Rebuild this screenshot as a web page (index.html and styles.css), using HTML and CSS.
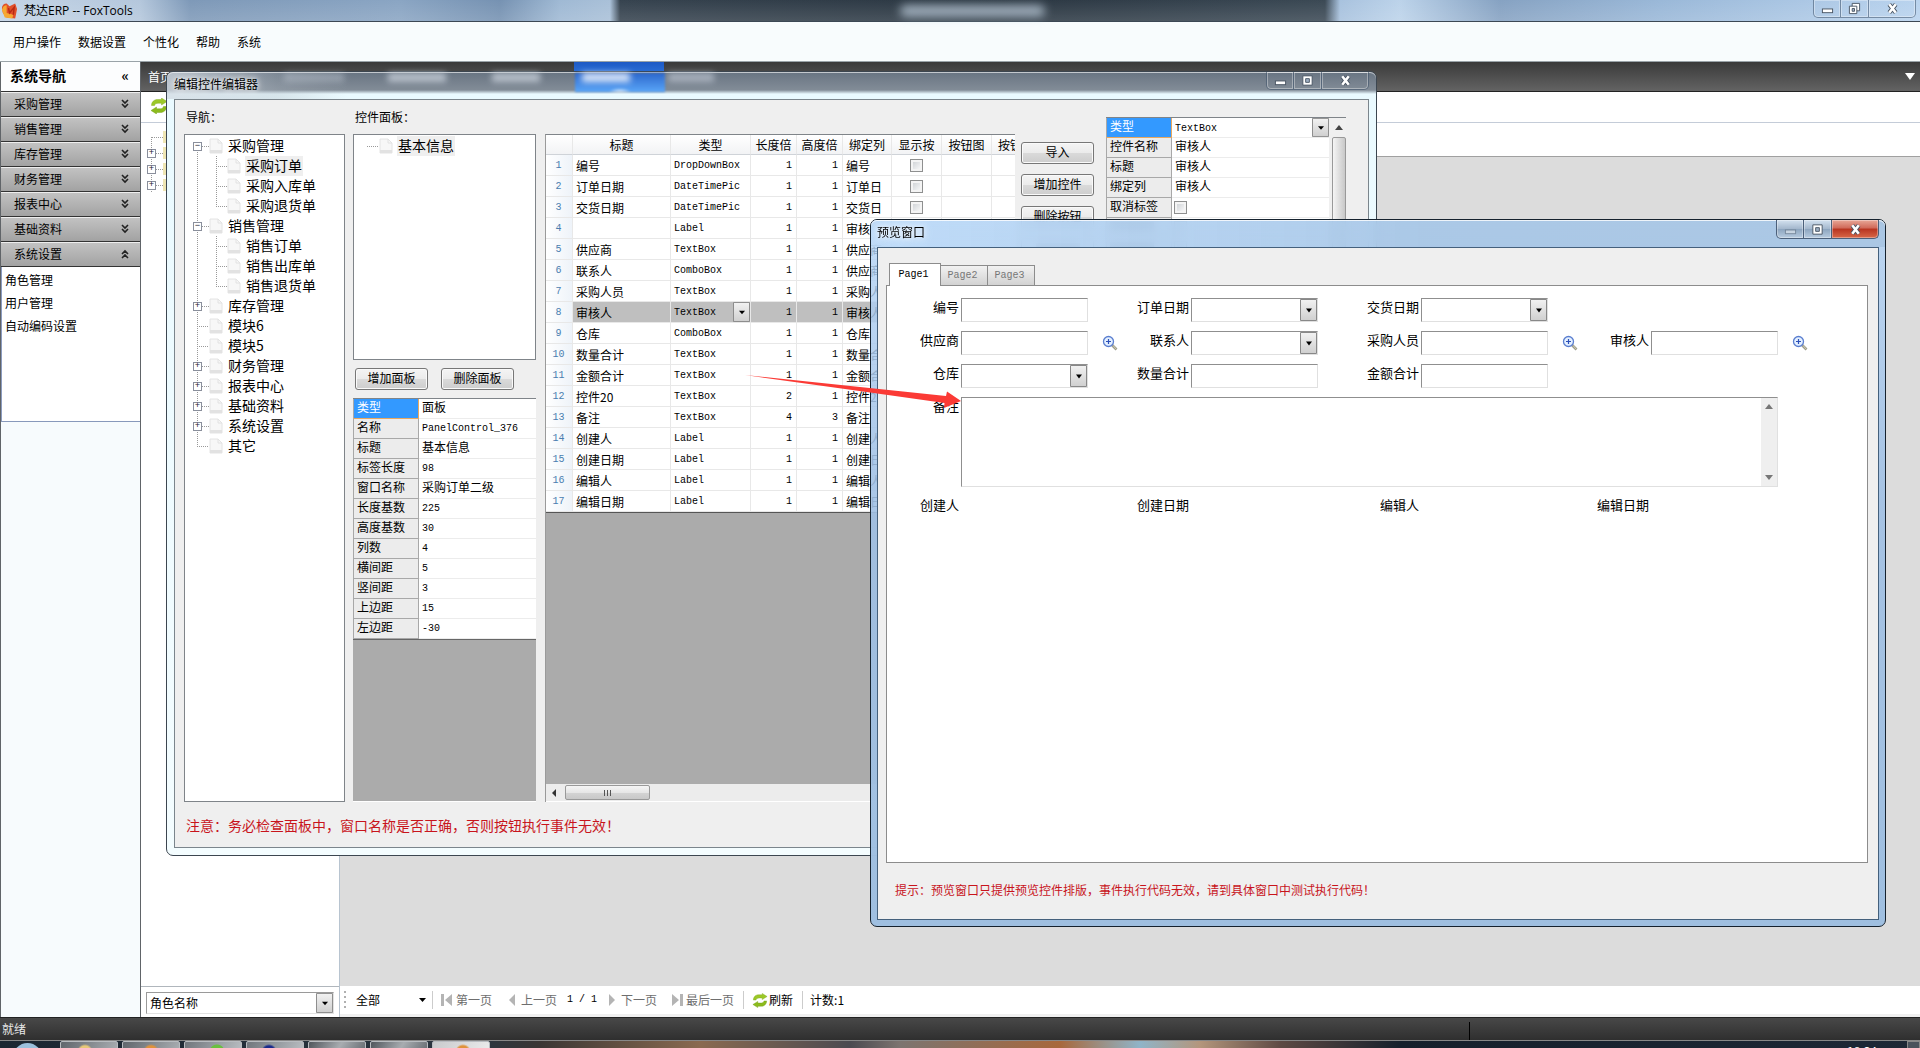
FILE: index.html
```html
<!DOCTYPE html>
<html lang="zh-CN">
<head>
<meta charset="utf-8">
<title>梵达ERP -- FoxTools</title>
<link rel="stylesheet" href="styles.css">
</head>
<body>
<svg class="defs" aria-hidden="true">
  <defs>
    <symbol id="refresh" viewBox="0 0 18 16"><path d="M1.500 7.500C1.500 4 4 1.500 7.500 1.500h4V0L17 3.500 11.500 7V5.200H8C6 5.200 5 6 4.500 7.500z" fill="#9cc828" stroke="#7aa614" stroke-width=".4"/><path d="M16.500 8.500c0 3.500-2.500 6-6 6h-4V16L1 12.500 6.500 9v1.800H10c2 0 3-.8 3.500-2.300z" fill="#8cbb1c" stroke="#6c9a10" stroke-width=".4"/></symbol>
    <symbol id="zoom" viewBox="0 0 16 16"><path d="M10 10l4.500 4.500" stroke="#9a9a90" stroke-width="2.600"/><path d="M11 10.500l3.500 4" stroke="#d8d2a8" stroke-width="1"/><circle cx="6.500" cy="6.500" r="5" fill="#e4f0ff" stroke="#5b7fd0" stroke-width="1.300"/><path d="M6.500 4v5M4 6.500h5" stroke="#2d50b8" stroke-width="1.200"/></symbol>
    <symbol id="page" viewBox="0 0 14 16"><path d="M1 1h8l4 4v10H1z" fill="#f7f7f7" stroke="#e4e4e4"/><path d="M1 12h12v3H1z" fill="#e2e2e2"/><path d="M9 1v4h4" fill="none" stroke="#e2e2e2"/></symbol>
    <symbol id="down" viewBox="0 0 8 10"><path d="M1 1l3 3 3-3M1 5l3 3 3-3" fill="none" stroke="#222" stroke-width="1.600"/></symbol>
    <symbol id="up" viewBox="0 0 8 10"><path d="M1 5l3-3 3 3M1 9l3-3 3 3" fill="none" stroke="#222" stroke-width="1.600"/></symbol>
    <symbol id="w-min" viewBox="0 0 14 14"><rect x="1.500" y="7.500" width="11" height="4" fill="#fff" stroke="#4a5563"/></symbol>
    <symbol id="w-max" viewBox="0 0 14 14"><path d="M2 2h10v10H2z" fill="#fff" stroke="#4a5563"/><path d="M5 5h4v4H5z" fill="#9fb0c4" stroke="#4a5563"/></symbol>
    <symbol id="w-rest" viewBox="0 0 14 14"><path d="M4.500 1.500h8v8h-8z" fill="#fff" stroke="#4a5563"/><path d="M1.500 4.500h8v8h-8z" fill="#fff" stroke="#4a5563"/><path d="M4.500 7h2.500v3H4.500z" fill="#9fb0c4" stroke="#4a5563"/></symbol>
    <symbol id="w-close" viewBox="0 0 14 14"><path d="M3.500 2.500l7 9M10.500 2.500l-7 9" stroke="#4a5563" stroke-width="4.600"/><path d="M3.500 2.500l7 9M10.500 2.500l-7 9" stroke="#fff" stroke-width="2.800"/></symbol>
  </defs>
</svg>

<header class="titlebar">
  <svg class="logo" viewBox="0 0 18 18"><path d="M1 6C1 3 3 1 6 1l3 3 6-3 2 6-2 10-9-1-4-5z" fill="#e0502a"/><path d="M1 8C2 4 4 3 6 3v8l7 2-1 4-8-1z" fill="#f6a832"/><path d="M8 6l1 5 5-6-1 8" fill="none" stroke="#b82a14" stroke-width="1.500"/></svg>
  <h1>梵达ERP -- FoxTools</h1>
  <span class="haze"></span>
  <div class="winbtns">
    <button aria-label="最小化"><svg><use href="#w-min"/></svg></button><button aria-label="还原"><svg><use href="#w-rest"/></svg></button><button class="wide" aria-label="关闭"><svg><use href="#w-close"/></svg></button>
  </div>
</header>
<nav class="menu"><a href="#">用户操作</a><a href="#">数据设置</a><a href="#">个性化</a><a href="#">帮助</a><a href="#">系统</a></nav>

<div class="work">
  <aside class="side">
    <h2>系统导航<span>«</span></h2>
    <button class="acc">采购管理<svg><use href="#down"/></svg></button>
    <button class="acc">销售管理<svg><use href="#down"/></svg></button>
    <button class="acc">库存管理<svg><use href="#down"/></svg></button>
    <button class="acc">财务管理<svg><use href="#down"/></svg></button>
    <button class="acc">报表中心<svg><use href="#down"/></svg></button>
    <button class="acc">基础资料<svg><use href="#down"/></svg></button>
    <button class="acc">系统设置<svg><use href="#up"/></svg></button>
    <div class="links"><a href="#">角色管理</a><a href="#">用户管理</a><a href="#">自动编码设置</a></div>
  </aside>
  <main class="main">
    <div class="tabbar">
      <a href="#">首页</a>
      <i class="on"></i>
      <span class="more"></span>
    </div>
    <div class="tools"><svg><use href="#refresh"/></svg></div>
    <div class="content">
      <section class="roles">
        <ul class="stub"><li><b></b></li><li><em>+</em><b></b></li><li><em>+</em><b></b></li><li><em>+</em><b></b></li></ul>
        <div class="rolebox"><select class="combo" aria-label="查询字段"><option>角色名称</option></select></div>
      </section>
      <section class="data">
        <div class="band"></div>
        <div class="canvas"></div>
        <div class="pager">
          <span class="grip"></span>
          <select class="range" aria-label="范围"><option>全部</option></select>
          <span class="sep"></span>
          <button disabled><svg viewBox="0 0 12 12"><path d="M0 0h3v12H0zM11 0v12L4 6z"/></svg>第一页</button>
          <button disabled><svg viewBox="0 0 12 12"><path d="M9 0v12L3 6z"/></svg>上一页</button>
          <span class="num">1 / 1</span>
          <button disabled><svg viewBox="0 0 12 12"><path d="M3 0v12l6-6z"/></svg>下一页</button>
          <button class="last" disabled><svg viewBox="0 0 12 12"><path d="M9 0h3v12H9zM1 0v12l7-6z"/></svg>最后一页</button>
          <span class="sep"></span>
          <button class="live"><svg><use href="#refresh"/></svg>刷新</button>
          <span class="sep"></span>
          <span>计数:1</span>
        </div>
      </section>
    </div>
  </main>
</div>
<footer class="status"><span>就绪</span><i></i></footer>
<div class="taskbar"><b class="orb"></b><i class="y"></i><i class="o"></i><i class="g"></i><i class="n"></i><i></i><i></i><i class="o lit"></i><span class="clock">18:34</span><span class="peek"></span></div>

<section class="win editor">
  <header class="caption"><h3>编辑控件编辑器</h3>
    <div class="winbtns"><button aria-label="最小化"><svg><use href="#w-min"/></svg></button><button aria-label="最大化"><svg><use href="#w-max"/></svg></button><button class="wide" aria-label="关闭"><svg><use href="#w-close"/></svg></button></div>
  </header>
  <div class="client">
    <div class="cols">
      <div class="col c-tree">
        <h4>导航：</h4>
        <ul class="tree box">
          <li><div class="node"><em>−</em><s></s><svg><use href="#page"/></svg><span>采购管理</span></div>
            <ul><li><div class="node"><s></s><svg><use href="#page"/></svg><span class="sel">采购订单</span></div></li><li><div class="node"><s></s><svg><use href="#page"/></svg><span>采购入库单</span></div></li><li><div class="node"><s></s><svg><use href="#page"/></svg><span>采购退货单</span></div></li></ul></li>
          <li><div class="node"><em>−</em><s></s><svg><use href="#page"/></svg><span>销售管理</span></div>
            <ul><li><div class="node"><s></s><svg><use href="#page"/></svg><span>销售订单</span></div></li><li><div class="node"><s></s><svg><use href="#page"/></svg><span>销售出库单</span></div></li><li><div class="node"><s></s><svg><use href="#page"/></svg><span>销售退货单</span></div></li></ul></li>
          <li><div class="node"><em>+</em><s></s><svg><use href="#page"/></svg><span>库存管理</span></div></li>
          <li><div class="node leaf"><s></s><svg><use href="#page"/></svg><span>模块6</span></div></li>
          <li><div class="node leaf"><s></s><svg><use href="#page"/></svg><span>模块5</span></div></li>
          <li><div class="node"><em>+</em><s></s><svg><use href="#page"/></svg><span>财务管理</span></div></li>
          <li><div class="node"><em>+</em><s></s><svg><use href="#page"/></svg><span>报表中心</span></div></li>
          <li><div class="node"><em>+</em><s></s><svg><use href="#page"/></svg><span>基础资料</span></div></li>
          <li><div class="node"><em>+</em><s></s><svg><use href="#page"/></svg><span>系统设置</span></div></li>
          <li><div class="node leaf"><s></s><svg><use href="#page"/></svg><span>其它</span></div></li>
        </ul>
      </div>
      <div class="col c-panel">
        <h4>控件面板：</h4>
        <ul class="panels box"><li><div class="node leaf"><s></s><svg><use href="#page"/></svg><span class="sel">基本信息</span></div></li></ul>
        <div class="pair"><button class="btn">增加面板</button><button class="btn">删除面板</button></div>
        <div class="sheet">
          <table class="props">
            <tr class="cur"><th>类型</th><td>面板</td></tr>
            <tr><th>名称</th><td class="mono">PanelControl_376</td></tr>
            <tr><th>标题</th><td>基本信息</td></tr>
            <tr><th>标签长度</th><td class="mono">98</td></tr>
            <tr><th>窗口名称</th><td>采购订单二级</td></tr>
            <tr><th>长度基数</th><td class="mono">225</td></tr>
            <tr><th>高度基数</th><td class="mono">30</td></tr>
            <tr><th>列数</th><td class="mono">4</td></tr>
            <tr><th>横间距</th><td class="mono">5</td></tr>
            <tr><th>竖间距</th><td class="mono">3</td></tr>
            <tr><th>上边距</th><td class="mono">15</td></tr>
            <tr><th>左边距</th><td class="mono">-30</td></tr>
          </table>
        </div>
      </div>
      <div class="c-grid">
        <table class="grid">
          <colgroup><col class="w-no"><col class="w-title"><col class="w-type"><col class="w-len"><col class="w-len"><col class="w-bind"><col class="w-chk"><col class="w-chk"><col class="w-chk"></colgroup>
          <thead><tr><th></th><th>标题</th><th>类型</th><th>长度倍</th><th>高度倍</th><th>绑定列</th><th>显示按</th><th>按钮图</th><th class="part">按钮</th></tr></thead>
          <tbody>
            <tr><th>1</th><td>编号</td><td>DropDownBox</td><td>1</td><td>1</td><td>编号</td><td><input type="checkbox" aria-label="显示按钮"></td><td></td><td></td></tr>
            <tr><th>2</th><td>订单日期</td><td>DateTimePic</td><td>1</td><td>1</td><td>订单日</td><td><input type="checkbox" aria-label="显示按钮"></td><td></td><td></td></tr>
            <tr><th>3</th><td>交货日期</td><td>DateTimePic</td><td>1</td><td>1</td><td>交货日</td><td><input type="checkbox" aria-label="显示按钮"></td><td></td><td></td></tr>
            <tr><th>4</th><td></td><td>Label</td><td>1</td><td>1</td><td>审核</td><td></td><td></td><td></td></tr>
            <tr><th>5</th><td>供应商</td><td>TextBox</td><td>1</td><td>1</td><td>供应商</td><td></td><td></td><td></td></tr>
            <tr><th>6</th><td>联系人</td><td>ComboBox</td><td>1</td><td>1</td><td>供应商</td><td></td><td></td><td></td></tr>
            <tr><th>7</th><td>采购人员</td><td>TextBox</td><td>1</td><td>1</td><td>采购人</td><td></td><td></td><td></td></tr>
            <tr class="cur"><th>8</th><td>审核人</td><td class="edit"><select class="combo mono" aria-label="类型"><option>TextBox</option></select></td><td>1</td><td>1</td><td>审核人</td><td></td><td></td><td></td></tr>
            <tr><th>9</th><td>仓库</td><td>ComboBox</td><td>1</td><td>1</td><td>仓库</td><td></td><td></td><td></td></tr>
            <tr><th>10</th><td>数量合计</td><td>TextBox</td><td>1</td><td>1</td><td>数量合</td><td></td><td></td><td></td></tr>
            <tr><th>11</th><td>金额合计</td><td>TextBox</td><td>1</td><td>1</td><td>金额合</td><td></td><td></td><td></td></tr>
            <tr><th>12</th><td>控件20</td><td>TextBox</td><td>2</td><td>1</td><td>控件20</td><td></td><td></td><td></td></tr>
            <tr><th>13</th><td>备注</td><td>TextBox</td><td>4</td><td>3</td><td>备注</td><td></td><td></td><td></td></tr>
            <tr><th>14</th><td>创建人</td><td>Label</td><td>1</td><td>1</td><td>创建人</td><td></td><td></td><td></td></tr>
            <tr><th>15</th><td>创建日期</td><td>Label</td><td>1</td><td>1</td><td>创建日</td><td></td><td></td><td></td></tr>
            <tr><th>16</th><td>编辑人</td><td>Label</td><td>1</td><td>1</td><td>编辑人</td><td></td><td></td><td></td></tr>
            <tr><th>17</th><td>编辑日期</td><td>Label</td><td>1</td><td>1</td><td>编辑日</td><td></td><td></td><td></td></tr>
          </tbody>
        </table>
        <div class="hscroll"><svg viewBox="0 0 6 8"><path d="M5 0v8L1 4z" fill="#333"/></svg><span><i></i><i></i><i></i></span></div>
      </div>
      <div class="c-btns"><button class="btn">导入</button><button class="btn">增加控件</button><button class="btn">删除按钮</button><button class="btn" aria-label="上移"><i class="smear"></i></button></div>
      <div class="c-props">
        <table class="props">
          <tr class="cur"><th>类型</th><td class="edit"><select class="combo mono" aria-label="类型"><option>TextBox</option></select></td></tr>
          <tr><th>控件名称</th><td>审核人</td></tr>
          <tr><th>标题</th><td>审核人</td></tr>
          <tr><th>绑定列</th><td>审核人</td></tr>
          <tr><th><label for="nolabel">取消标签</label></th><td class="edit"><input type="checkbox" id="nolabel"></td></tr>
          <tr><th><i class="smear"></i></th><td class="edit"><input type="checkbox" aria-label="选项"></td></tr>
          <tr><th><i class="smear"></i></th><td class="edit"><input type="checkbox" aria-label="选项"></td></tr>
        </table>
        <div class="vscroll"><svg viewBox="0 0 8 5"><path d="M0 5h8L4 0z" fill="#444"/></svg><span></span></div>
      </div>
    </div>
    <p class="notice">注意：务必检查面板中，窗口名称是否正确，否则按钮执行事件无效！</p>
  </div>
</section>

<section class="win preview">
  <header class="caption"><h3>预览窗口</h3>
    <div class="winbtns"><button class="dim" aria-label="最小化"><svg><use href="#w-min"/></svg></button><button aria-label="最大化"><svg><use href="#w-max"/></svg></button><button class="wide red" aria-label="关闭"><svg><use href="#w-close"/></svg></button></div>
  </header>
  <div class="client">
    <div class="tabs"><button class="on">Page1</button><button>Page2</button><button>Page3</button></div>
    <form class="form">
      <div class="f"><label for="f1">编号</label><input id="f1" type="text"></div>
      <div class="f"><label for="f2">订单日期</label><select id="f2" class="combo"></select></div>
      <div class="f"><label for="f3">交货日期</label><select id="f3" class="combo"></select></div>
      <div class="f"></div>
      <div class="f"><label for="f5">供应商</label><input id="f5" type="text"><svg><use href="#zoom"/></svg></div>
      <div class="f"><label for="f6">联系人</label><select id="f6" class="combo"></select></div>
      <div class="f"><label for="f7">采购人员</label><input id="f7" type="text"><svg><use href="#zoom"/></svg></div>
      <div class="f"><label for="f8">审核人</label><input id="f8" type="text"><svg><use href="#zoom"/></svg></div>
      <div class="f"><label for="f9">仓库</label><select id="f9" class="combo"></select></div>
      <div class="f"><label for="f10">数量合计</label><input id="f10" type="text"></div>
      <div class="f"><label for="f11">金额合计</label><input id="f11" type="text"></div>
      <div class="f"></div>
      <div class="f memo"><label for="f13">备注</label><div class="area"><textarea id="f13"></textarea><div class="rail"><svg viewBox="0 0 8 5"><path d="M0 5h8L4 0z" fill="#777"/></svg><svg viewBox="0 0 8 5"><path d="M0 0h8L4 5z" fill="#777"/></svg></div></div></div>
      <div class="f"><span class="lab">创建人</span></div>
      <div class="f"><span class="lab">创建日期</span></div>
      <div class="f"><span class="lab">编辑人</span></div>
      <div class="f"><span class="lab">编辑日期</span></div>
    </form>
    <p class="hint">提示：预览窗口只提供预览控件排版，事件执行代码无效，请到具体窗口中测试执行代码！</p>
  </div>
</section>

<svg class="arrow" viewBox="0 0 217 34" aria-hidden="true"><path d="M0 0L201 21l1-4.500 14 9.500-17 7 .5-5L150 21 100 14z" fill="#fb3a35"/></svg>
</body>
</html>
```

FILE: styles.css
```css
* { box-sizing: border-box; }
body {
  margin: 0;
  height: 100vh;
  position: relative;
  display: flex;
  flex-direction: column;
  overflow: hidden;
  background: #fff;
  color: #000;
  font: 12px/20px "Noto Sans CJK SC", "Liberation Sans", sans-serif;
}
h1, h2, h3, h4, p, ul { margin: 0; padding: 0; font-weight: normal; font-size: 12px; }
ul { list-style: none; }
button, input, select, textarea { font: inherit; color: inherit; margin: 0; padding: 0; border: 0; border-radius: 0; background: none; outline: 0; }
a { color: inherit; text-decoration: none; }
svg { display: block; flex: none; }
table { border-collapse: separate; border-spacing: 0; table-layout: fixed; }
th { font-weight: normal; text-align: left; }
.defs { position: absolute; width: 0; height: 0; }
.mono { font: 10px/20px "Liberation Mono", monospace; }

/* main window frame */
.titlebar {
  flex: none;
  height: 22px;
  display: flex;
  align-items: center;
  padding: 0 4px 0 1px;
  border-bottom: 1px solid #3c4854;
  background:
    linear-gradient(to bottom, rgba(255,255,255,0), rgba(255,255,255,.12)),
    linear-gradient(to right, #c3d4e6 0, #b4c7dc 140px, #7e99b8 190px, #8aa5c3 400px, #7692b2 500px, #9fb9d4 560px, #a9c0d8 610px, #36434f 620px, #2b3742 1000px, #3b4955 1325px, #a8c2de 1340px, #bcd3ea 1400px, #86a2c2 1500px, #9ab8d8 1660px, #b9d3ee 100%);
}
.logo { width: 17px; height: 18px; }
.titlebar h1 { font-family: "Open Sans", "Noto Sans CJK SC", sans-serif; margin-left: 6px; }
.haze { width: 145px; height: 12px; margin: 0 auto; border-radius: 6px; background: rgba(190,205,220,.75); filter: blur(5px); }
.winbtns { display: flex; align-self: flex-start; }
.winbtns button { width: 28px; height: 18px; display: flex; align-items: center; justify-content: center; border: 1px solid rgba(60,80,105,.55); border-top: 0; border-left-width: 0; box-shadow: inset 0 0 0 1px rgba(255,255,255,.35); }
.winbtns button:first-child { border-left-width: 1px; border-radius: 0 0 0 5px; }
.winbtns button.wide { width: 47px; border-radius: 0 0 5px 0; }
.winbtns svg { width: 13px; height: 13px; }
.menu { flex: none; height: 40px; display: flex; align-items: center; gap: 17px; padding: 0 13px; background: #f8fcfd; border-bottom: 1px solid #9aa3a8; }

.work { flex: 1; min-height: 0; display: flex; }
.side { width: 141px; flex: none; background: #f7fbfd; border: solid #606468; border-width: 0 1px; }
.side h2 { height: 30px; padding: 0 11px 0 9px; display: flex; justify-content: space-between; font: bold 14px/27px "Noto Sans CJK SC", sans-serif; background: #fcfdfe; border-bottom: 1px solid #333; }
.acc { width: 100%; height: 25px; display: flex; align-items: center; justify-content: space-between; padding: 0 11px 1px 13px; background: linear-gradient(#c2c2c2, #a2a2a2); border-top: 1px solid #eee; border-bottom: 1px solid #333; }
.acc svg { width: 8px; height: 10px; }
.links { height: 155px; padding: 1px 4px; display: flex; flex-direction: column; line-height: 23px; background: #fff; border-bottom: 1px solid #8899bb; box-shadow: inset 1px 0 #8c9cc0; }

.main { flex: 1; min-width: 0; display: flex; flex-direction: column; }
.tabbar { flex: none; height: 30px; padding: 0 5px 0 7px; display: flex; align-items: center; color: #fff; line-height: 27px; background: linear-gradient(#3a3a3a, #636363); border-bottom: 1px solid #222; }
.tabbar a { margin-right: 402px; }
.tabbar i { width: 90px; height: 29px; }
.tabbar i.on { background: linear-gradient(#1d59c4, #3f93f6); }
.more { margin-left: auto; border: 5px solid transparent; border-top: 7px solid #fff; border-bottom: 0; }
.tools { flex: none; height: 31px; padding: 6px 9px; border-bottom: 1px solid #c4ccd8; }
.tools svg { width: 18px; height: 16px; }
.content { flex: 1; min-height: 0; display: flex; }
.roles { width: 199px; flex: none; display: flex; flex-direction: column; border-right: 1px solid #b8c4d0; }
.stub { flex: 1; padding: 6px 6px; }
.stub li { height: 16px; display: flex; align-items: center; background: repeating-linear-gradient(90deg, #999 0 1px, transparent 1px 2px) 5px 8px / 11px 1px no-repeat, repeating-linear-gradient(#999 0 1px, transparent 1px 2px) 4px 0 / 1px 16px no-repeat; }
.stub li:first-child { background-position: 5px 8px, 4px 8px; }
.stub em, .node em { width: 9px; height: 9px; flex: none; font: 9px/7px "Liberation Mono", monospace; text-align: center; color: #223; border: 1px solid #8a8f9c; background: #fff; }
.stub b { width: 8px; height: 12px; margin-left: 7px; background: #efe6b4; }
.stub li:first-child b { margin-left: 16px; }
.rolebox { flex: none; height: 31px; padding: 5px; border-top: 1px solid #b0b6bc; }
.combo {
  appearance: none;
  width: 100%;
  height: 100%;
  border: 1px solid #9a9a9a;
  border-right-color: #e2e2e2;
  border-bottom-color: #e2e2e2;
  background:
    url("data:image/svg+xml,%3Csvg xmlns='http://www.w3.org/2000/svg' viewBox='0 0 17 22' preserveAspectRatio='none'%3E%3Cdefs%3E%3ClinearGradient id='g' x2='0' y2='1'%3E%3Cstop stop-color='%23f2f2f2'/%3E%3Cstop offset='1' stop-color='%23cfcfcf'/%3E%3C/linearGradient%3E%3C/defs%3E%3Cpath d='M.5.500h16v21H.500z' fill='url(%23g)' stroke='%23888'/%3E%3Cpath d='M6 9.500h6l-3 4z'/%3E%3C/svg%3E") right center / 17px 100% no-repeat #fff;
}
.rolebox .combo { height: 22px; width: 188px; padding-left: 3px; line-height: 18px; }
.data { flex: 1; min-width: 0; display: flex; flex-direction: column; }
.band { flex: none; height: 34px; border-bottom: 1px solid #a0a0a0; }
.canvas { flex: 1; background: #dcdcdc; }
.pager { flex: none; height: 31px; padding: 0 4px; display: flex; align-items: center; border-bottom: 3px solid #f0f0f0; }
.grip { width: 2px; height: 18px; margin-right: 10px; background: repeating-linear-gradient(#b0b0b0 0 2px, transparent 2px 5px); }
.range { appearance: none; width: 70px; height: 20px; background: url("data:image/svg+xml,%3Csvg xmlns='http://www.w3.org/2000/svg' viewBox='0 0 7 4'%3E%3Cpath d='M0 0h7L3.500 4z'/%3E%3C/svg%3E") right center / 7px 4px no-repeat; }
.sep { width: 1px; height: 18px; margin: 0 7px 0 6px; background: #ccc; }
.pager button { display: flex; align-items: center; gap: 3px; padding: 0 1px; margin-right: 12px; color: #6e6e6e; }
.pager button svg { width: 12px; height: 12px; fill: #b4b4b4; }
.pager button.last { margin-right: 2px; }
.pager button.live { color: #000; margin: 0 2px 0 0; gap: 1px; }
.pager button.live svg { width: 16px; height: 15px; }
.pager .num { margin: 0 8px 0 -3px; font: 10px/20px "Liberation Mono", monospace; }

.status { flex: none; height: 24px; display: flex; padding: 0 450px 0 2px; justify-content: space-between; color: #e8e8e8; line-height: 22px; background: linear-gradient(#484848, #2f2f2f); border-top: 1px solid #222; border-bottom: 1px solid #888; }
.status i { width: 1px; height: 18px; margin-top: 4px; background: #000; }
.taskbar { flex: none; height: 7px; overflow: hidden; display: flex; gap: 4px; padding-left: 13px; background: linear-gradient(to right, #1b2631 0, #2b3640 480px, #3a3634 540px, #8a6a50 700px, #4b4a50 850px, #7c7470 900px, #a8683c 1060px, #8fb4c8 1140px, #b4967c 1200px, #5e4a44 1280px, #16202c 1400px, #1e2836 100%); }
.taskbar i { width: 58px; height: 20px; border: 1px solid #b8bcc0; border-radius: 2px; background: linear-gradient(120deg, #50565c, #a8acb0 50%, #5c6268); }
.taskbar i.o { background: radial-gradient(circle at 28px 10px, #e0923a 6px, transparent 8px), linear-gradient(120deg, #60666c, #b0b4b8); }
.taskbar i.y { background: radial-gradient(circle at 24px 10px, #e8c878 6px, transparent 8px), linear-gradient(120deg, #60666c, #b0b4b8); }
.taskbar i.g { background: radial-gradient(circle at 32px 10px, #6ac040 7px, transparent 8px), linear-gradient(120deg, #70767c, #c0c4c8); }
.taskbar i.n { background: radial-gradient(circle at 22px 10px, #1a2a8c 6px, transparent 8px), linear-gradient(120deg, #70767c, #c0c4c8); }
.taskbar i.lit { background: radial-gradient(circle at 30px 10px, #e0923a 6px, transparent 8px), linear-gradient(120deg, #c8cacc, #eee); }
.orb { width: 29px; height: 29px; margin: 2px 14px 0 0; border-radius: 50%; background: #9cc0dc; }
.clock { margin: 4px 26px 0 auto; color: #fff; line-height: 12px; }
.peek { width: 13px; height: 20px; border: 1px solid #888; background: #4a525c; }

/* floating windows */
.win { position: absolute; display: flex; flex-direction: column; border: 1px solid #3c4650; border-radius: 7px; }
.win .client { flex: 1; min-height: 0; display: flex; flex-direction: column; background: #efefef; border: 1px solid #7b858c; }
.caption { flex: none; display: flex; justify-content: space-between; border-radius: 6px 6px 0 0; }
.caption h3 { text-shadow: 0 0 5px #fff, 0 0 8px #fff; }
.smear { display: block; width: 44px; height: 9px; background: #555; opacity: .6; }

.editor { left: 166px; top: 71px; width: 1211px; height: 785px; padding: 0 7px 7px; background: linear-gradient(#687482 0, #828c97 18px, #eafaff 22px, #f4fdff 100%); }
.editor .caption { height: 27px; margin: 0 -7px; padding: 0 7px; background: linear-gradient(to right, rgba(210,218,226,.75) 0, rgba(170,180,190,.3) 110px, transparent 180px); box-shadow: inset 0 1px rgba(255,255,255,.6); position: relative; }
.editor .caption h3 { line-height: 24px; }
/* background tabs seen through the glass */
.editor .caption::before { content: ""; position: absolute; left: 408px; top: 1px; width: 90px; height: 19px; background: radial-gradient(ellipse at 45px 20px, #fff, transparent 12px), linear-gradient(#2c67cc, #5aa6f8); filter: blur(1px); }
.editor .caption::after { content: ""; position: absolute; left: 117px; top: 1px; width: 440px; height: 9px; background: linear-gradient(90deg, rgba(200,208,218,.5) 60px, transparent 60px 104px, #c8d0da 104px 162px, transparent 162px 208px, #c8d0da 208px 256px, transparent 256px 298px, #fff 298px 346px, transparent 346px 384px, #b4bcc8 384px 430px, transparent 430px); filter: blur(3px); opacity: .8; }
.cols { flex: 1; min-height: 0; display: flex; padding-left: 9px; }
.col { display: flex; flex-direction: column; }
.col h4 { flex: none; height: 34px; line-height: 34px; padding-left: 2px; }
.box { background: #fff; border: 1px solid #7f8489; }
.c-tree { width: 161px; margin-right: 8px; }
.c-panel { width: 183px; margin-right: 9px; }
.tree { flex: 1; padding: 1px 0 0 8px; font-size: 14px; }
.tree > li { background: repeating-linear-gradient(#999 0 1px, transparent 1px 2px) 4px 0 / 1px 100% no-repeat; }
.tree > li:first-child { background-position: 4px 10px; }
.tree > li:last-child { background-size: 1px 10px; }
.tree ul { padding-left: 23px; background: repeating-linear-gradient(#999 0 1px, transparent 1px 2px) 23px 0 / 1px calc(100% - 10px) no-repeat; }
.node { height: 20px; display: flex; align-items: center; white-space: nowrap; font-size: 14px; }
.node s { width: 7px; height: 1px; flex: none; background: repeating-linear-gradient(90deg, #999 0 1px, transparent 1px 2px); }
.node.leaf s { width: 12px; }
.tree ul s { width: 11px; }
.node.leaf { padding-left: 4px; }
.node svg { width: 14px; height: 16px; margin-right: 4px; }
.node span { padding: 0 1px; height: 20px; line-height: 18px; }
.node .sel { background: #efefef; }
.panels { flex: none; height: 226px; padding: 1px 0 0 9px; }
.pair { flex: none; display: flex; gap: 13px; padding: 8px 0 8px 2px; }
.btn { width: 73px; height: 22px; flex: none; display: flex; align-items: center; justify-content: center; line-height: 16px; padding-bottom: 3px; border: 1px solid #777; border-radius: 3px; background: linear-gradient(#f4f4f4, #ebebeb 50%, #dadada 50%, #cdcdcd); box-shadow: inset 0 0 0 1px #fafafa; }
.sheet { flex: 1; background: #ababab; border-top: 1px solid #7f8489; border-bottom: 1px solid #fff; }
.props { width: 100%; border-bottom: 1px solid #666; }
.props th { width: 66px; height: 20px; padding: 0 0 3px 3px; line-height: 16px; background: #ececec; border: solid #a8a8a8; border-width: 0 1px 1px; }
.props td { height: 20px; padding: 0 0 3px 3px; line-height: 16px; background: #fff; border-bottom: 1px solid #ececec; }
.props td.mono { padding: 0 0 0 3px; font: 10px/19px "Liberation Mono", monospace; }
.props .cur th { color: #fff; background: #3399ff; border-bottom-color: #e8a860; border-right-color: #e8a860; }
.props td.edit, .grid td.edit { padding: 0; }
.props .combo, .grid .combo { height: 19px; padding: 1px 0 0 3px; border: 0; display: block; }
.grid .combo { height: 20px; background-color: transparent; }

.c-grid { width: 470px; margin: 34px 6px 0 0; display: flex; flex-direction: column; overflow: hidden; background: #ababab; border-top: 1px solid #7f8489; border-left: 1px solid #9a9a9a; }
.grid { width: 496px; background: #fff; border-bottom: 1px solid #555; }
.w-no { width: 27px; } .w-title { width: 98px; } .w-type { width: 80px; } .w-len { width: 46px; } .w-bind { width: 49px; } .w-chk { width: 50px; }
.grid th, .grid td { height: 21px; padding: 0 4px 0 3px; line-height: 19px; overflow: hidden; white-space: nowrap; border: solid #e8e8e8; border-width: 0 1px 1px 0; }
.grid thead th { height: 20px; padding: 0; line-height: 18px; text-align: center; background: linear-gradient(#fff, #f2f3f5); border-bottom-color: #cfd3d8; }
.grid thead th.part { text-align: left; padding-left: 6px; }
.grid tbody th { color: #4a7eb0; background: linear-gradient(90deg, #fff, #eef3f9); }
.grid tbody th, .grid td:nth-child(3), .grid td:nth-child(4), .grid td:nth-child(5) { padding: 1px 4px 0 3px; font: 10px/19px "Liberation Mono", monospace; text-align: center; }
.grid td:nth-child(3) { text-align: left; }
.grid td:nth-child(4), .grid td:nth-child(5) { text-align: right; }
.grid td.edit:nth-child(3) { padding: 0; }
.grid .cur td { background: #bfbfbf; }
input[type="checkbox"] { appearance: none; display: block; width: 13px; height: 13px; margin: 0 auto; border: 1px solid #8e8f8f; background: linear-gradient(135deg, #c8ccd0, #fff); box-shadow: inset 0 0 0 2px #f4f4f4; }
.props input[type="checkbox"] { margin: 0 0 0 2px; }
.hscroll { margin-top: auto; height: 18px; display: flex; align-items: center; gap: 8px; padding-left: 5px; background: #ececec; border-bottom: 1px solid #fff; }
.hscroll svg { width: 6px; height: 8px; }
.hscroll span { width: 85px; height: 15px; display: flex; justify-content: center; align-items: center; gap: 2px; border: 1px solid #999; border-radius: 2px; background: linear-gradient(#f5f5f5, #e6e6e6 50%, #d4d4d4 50%, #c8c8c8); }
.hscroll i { width: 1px; height: 6px; background: #555; }
.c-btns { width: 73px; margin-right: 12px; padding-top: 42px; display: flex; flex-direction: column; gap: 10px; }
.c-props { width: 240px; margin-top: 17px; display: flex; align-items: flex-start; background: #fff; border-top: 1px solid #7f8489; }
.c-props .props { width: 223px; }
.vscroll { flex: 1; align-self: stretch; display: flex; flex-direction: column; align-items: center; padding: 7px 0 0 2px; background: #f0f0f0; }
.vscroll svg { width: 8px; height: 5px; }
.vscroll span { width: 14px; height: 400px; margin-top: 7px; border: 1px solid #999; border-radius: 2px; background: linear-gradient(90deg, #f5f5f5, #c8c8c8); }
.notice { flex: none; height: 45px; padding-left: 11px; font-size: 14px; line-height: 46px; color: #c8141c; }

.preview { left: 870px; top: 219px; width: 1016px; height: 708px; padding: 0 6px 6px; border-color: #16222e; background: linear-gradient(rgba(180,212,246,.8), rgba(160,192,228,.9) 40%, #9fbfe0); }
.preview .caption { height: 27px; margin: 0 -6px; padding: 0 6px; backdrop-filter: blur(4px); background: linear-gradient(90deg, rgba(190,220,250,.5), rgba(160,192,224,.6) 55%, rgba(160,190,220,.6)); box-shadow: inset 0 1px rgba(255,255,255,.8); }
.preview .caption h3 { line-height: 24px; }
.preview .winbtns button { height: 19px; border-color: #4c607a; background: linear-gradient(#d4e2f0, #a2b6cc 50%, #8ca4be 50%, #b8cce0); }
.preview .winbtns button.red { background: linear-gradient(#e8a898, #d06858 45%, #b83420 50%, #d86848); }
.preview .winbtns .dim svg { opacity: .45; }
.preview .client { border-color: #44607c; padding: 15px 10px 0 8px; }
.tabs { flex: none; display: flex; align-items: flex-end; padding-left: 3px; }
.tabs button { width: 47px; height: 20px; padding-right: 3px; font: 10px/18px "Liberation Mono", monospace; color: #777; border: 1px solid #8c8c8c; border-left: 0; border-bottom: 0; background: linear-gradient(#f2f2f2, #d2d2d2); }
.tabs .on { width: 52px; height: 23px; margin-bottom: -1px; color: #000; border-left: 1px solid #8c8c8c; background: #fff; position: relative; }
.form { flex: 1; min-height: 0; display: grid; grid-template-columns: repeat(4, 230px); grid-auto-rows: 33px; align-content: start; padding-top: 12px; background: #fff; border: 1px solid #8c8c8c; font-size: 13px; }
.f { display: flex; align-items: flex-start; }
.f label, .lab { width: 72px; margin-right: 2px; text-align: right; line-height: 18px; flex: none; white-space: nowrap; }
.f input, .f .combo, .area { width: 127px; height: 24px; flex: none; border: 1px solid #8f8f8f; border-right-color: #e0e0e0; border-bottom-color: #e0e0e0; }
.f svg { width: 16px; height: 16px; margin: 4px 0 0 14px; }
.memo { grid-column: 1 / 5; grid-row: span 3; }
.area { width: 817px; height: 90px; display: flex; }
.area textarea { flex: 1; resize: none; }
.rail { width: 16px; display: flex; flex-direction: column; justify-content: space-between; align-items: center; padding: 6px 0; background: #efefef; }
.f .rail svg { width: 8px; height: 5px; margin: 0; }
.hint { flex: none; height: 56px; padding-left: 9px; line-height: 54px; color: #c8141c; }

/* callout drawn over both windows */
.arrow { position: absolute; left: 745px; top: 375px; width: 217px; height: 34px; }
```
